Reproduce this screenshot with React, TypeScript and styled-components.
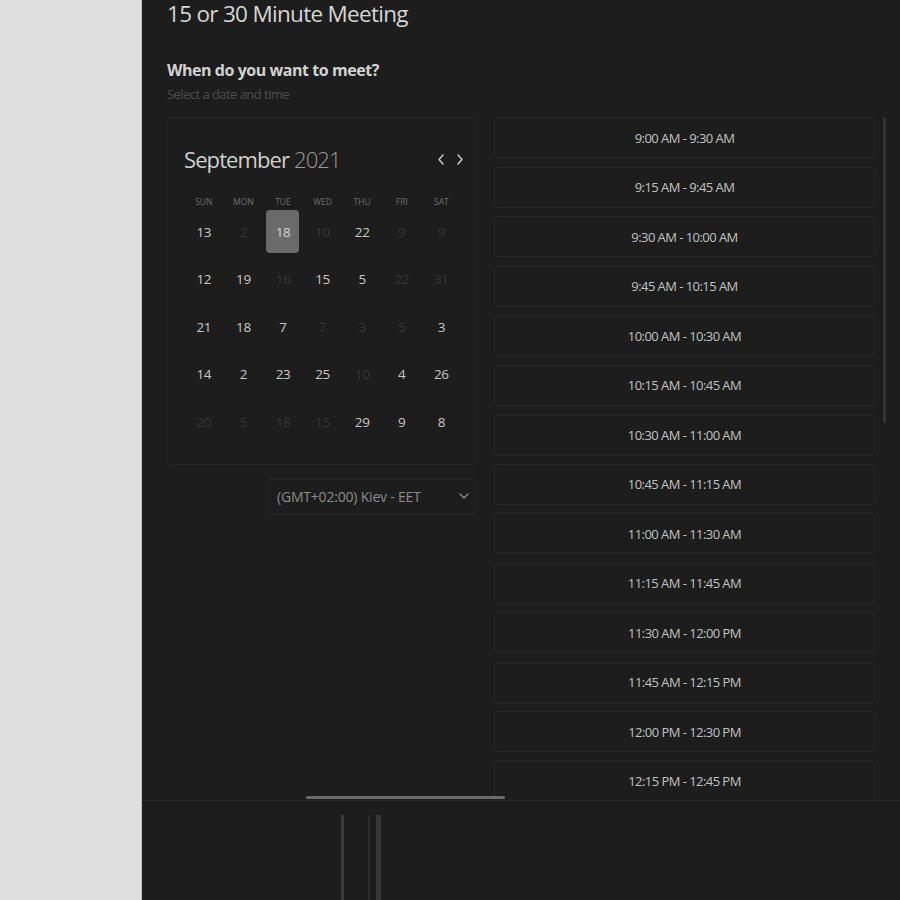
import styled, { createGlobalStyle } from 'styled-components'

const GlobalStyle = createGlobalStyle`
  html, body {
    margin: 0;
    padding: 0;
    background: #dfdfdf;
    font-family: "Open Sans", "Noto Sans", sans-serif;
  }
  * { box-sizing: border-box; }
`

const Page = styled.div`
  display: grid;
  grid-template-columns: 141px 1fr;
  height: 900px;
  overflow: hidden;
`

const Side = styled.div`
  background: #dfdfdf;
`

const Panel = styled.div`
  background: #1d1d1d;
  border-left: 1px solid #bdbdbd;
  display: flex;
  flex-direction: column;
  position: relative;
`

const ScrollArea = styled.div`
  height: 801px;
  overflow: hidden;
  padding-left: 25px;
  border-bottom: 1px solid #282828;
  position: relative;
`

const Title = styled.h1`
  margin: 0;
  font-size: 22.5px;
  line-height: 28px;
  font-weight: 400;
  color: #d6d6d6;
  letter-spacing: -0.7px;
`

const Question = styled.h2`
  margin: 31px 0 0;
  font-size: 16px;
  line-height: 22px;
  font-weight: 700;
  color: #d2d2d2;
  letter-spacing: -0.45px;
`

const Hint = styled.p`
  margin: 4px 0 0;
  font-size: 13px;
  line-height: 18px;
  color: #4e4e4e;
  letter-spacing: -0.55px;
`

const Columns = styled.div`
  display: flex;
  gap: 17px;
  margin-top: 14px;
  align-items: flex-start;
`

const CalColumn = styled.div`
  width: 310px;
  display: flex;
  flex-direction: column;
  align-items: flex-end;
`

const CalBox = styled.div`
  width: 310px;
  border: 1px solid #252525;
  border-radius: 3px;
  padding: 26px 15px 18px 16px;
`

const MonthRow = styled.div`
  display: flex;
  align-items: center;
  justify-content: space-between;
  margin-right: -3px;
`

const Month = styled.div`
  font-size: 22px;
  line-height: 30px;
  color: #cfcfcf;
  letter-spacing: -0.9px;
  span {
    font-weight: 300;
    color: #9a9a9a;
  }
`

const Arrows = styled.div`
  display: flex;
  gap: 11px;
  color: #cfcfcf;
`

const DayGrid = styled.div`
  display: grid;
  grid-template-columns: repeat(7, 39.6px);
  margin-top: 21px;
`

const DayHead = styled.div`
  font-size: 8.5px;
  line-height: 14px;
  text-align: center;
  color: #6f6f6f;
`

const Cell = styled.div<{ $muted?: boolean; $selected?: boolean }>`
  height: 47.5px;
  display: flex;
  align-items: center;
  justify-content: center;
  font-size: 13.5px;
  color: ${p => (p.$muted ? '#363636' : '#c8c8c8')};
  letter-spacing: -0.4px;
  span {
    width: 33px;
    height: 43px;
    display: flex;
    align-items: center;
    justify-content: center;
    border-radius: 4px;
    background: ${p => (p.$selected ? '#6b6b6b' : 'transparent')};
    color: ${p => (p.$selected ? '#d2d2d2' : 'inherit')};
  }
`

const DaysWrap = styled.div`
  grid-column: 1 / -1;
  display: grid;
  grid-template-columns: repeat(7, 39.6px);
  margin-top: -1px;
`

const TzSelect = styled.div`
  width: 209px;
  height: 37px;
  margin-top: 13px;
  margin-right: 1px;
  border: 1px solid #252525;
  border-radius: 3px;
  display: flex;
  align-items: center;
  justify-content: space-between;
  padding: 0 5px 0 9px;
  font-size: 14px;
  color: #8c8c8c;
  letter-spacing: -0.2px;
`

const SlotList = styled.div`
  width: 381px;
  display: flex;
  flex-direction: column;
  gap: 8.5px;
`

const Slot = styled.div`
  height: 41px;
  border: 1px solid #262626;
  border-radius: 3px;
  display: flex;
  align-items: center;
  justify-content: center;
  font-size: 13px;
  color: #c2c2c2;
  letter-spacing: -0.55px;
`

const VScroll = styled.div`
  position: absolute;
  left: 741px;
  top: 117px;
  width: 3px;
  height: 306px;
  border-radius: 2px;
  background: #353535;
`

const HScroll = styled.div`
  position: absolute;
  left: 164px;
  bottom: 1px;
  width: 199px;
  height: 3px;
  border-radius: 2px;
  background: #6b6b6b;
`

const Footer = styled.div`
  flex: 1;
  display: flex;
  padding-top: 14px;
  padding-left: 199px;
`

const Bar = styled.div<{ $w: number; $c: string; $ml: number }>`
  width: ${p => p.$w}px;
  margin-left: ${p => p.$ml}px;
  background: ${p => p.$c};
`

const weekDays = ['SUN', 'MON', 'TUE', 'WED', 'THU', 'FRI', 'SAT']

type Day = { n: number; m?: boolean; s?: boolean }

const days: Day[] = [
  { n: 13 }, { n: 2, m: true }, { n: 18, s: true }, { n: 10, m: true }, { n: 22 }, { n: 9, m: true }, { n: 9, m: true },
  { n: 12 }, { n: 19 }, { n: 16, m: true }, { n: 15 }, { n: 5 }, { n: 22, m: true }, { n: 31, m: true },
  { n: 21 }, { n: 18 }, { n: 7 }, { n: 7, m: true }, { n: 3, m: true }, { n: 5, m: true }, { n: 3 },
  { n: 14 }, { n: 2 }, { n: 23 }, { n: 25 }, { n: 10, m: true }, { n: 4 }, { n: 26 },
  { n: 20, m: true }, { n: 5, m: true }, { n: 18, m: true }, { n: 15, m: true }, { n: 29 }, { n: 9 }, { n: 8 },
]

const slots = [
  '9:00 AM - 9:30 AM',
  '9:15 AM - 9:45 AM',
  '9:30 AM - 10:00 AM',
  '9:45 AM - 10:15 AM',
  '10:00 AM - 10:30 AM',
  '10:15 AM - 10:45 AM',
  '10:30 AM - 11:00 AM',
  '10:45 AM - 11:15 AM',
  '11:00 AM - 11:30 AM',
  '11:15 AM - 11:45 AM',
  '11:30 AM - 12:00 PM',
  '11:45 AM - 12:15 PM',
  '12:00 PM - 12:30 PM',
  '12:15 PM - 12:45 PM',
]

const Chevron = ({ dir }: { dir: 'left' | 'right' | 'down' }) => {
  const d = dir === 'left' ? 'M6 2 L2 6.5 L6 11' : dir === 'right' ? 'M2 2 L6 6.5 L2 11' : 'M2 4 L6 8 L10 4'
  const w = dir === 'down' ? 12 : 8
  return (
    <svg width={w} height="13" viewBox={`0 0 ${w} 13`} fill="none">
      <path d={d} stroke="currentColor" strokeWidth="1.4" strokeLinecap="round" strokeLinejoin="round" />
    </svg>
  )
}

export default function App() {
  return (
    <>
      <GlobalStyle />
      <Page>
        <Side />
        <Panel>
          <ScrollArea>
            <Title>15 or 30 Minute Meeting</Title>
            <Question>When do you want to meet?</Question>
            <Hint>Select a date and time</Hint>
            <Columns>
              <CalColumn>
                <CalBox>
                  <MonthRow>
                    <Month>September <span>2021</span></Month>
                    <Arrows>
                      <Chevron dir="left" />
                      <Chevron dir="right" />
                    </Arrows>
                  </MonthRow>
                  <DayGrid>
                    {weekDays.map(w => <DayHead key={w}>{w}</DayHead>)}
                    <DaysWrap>
                      {days.map((d, i) => (
                        <Cell key={i} $muted={d.m} $selected={d.s}>
                          <span>{d.n}</span>
                        </Cell>
                      ))}
                    </DaysWrap>
                  </DayGrid>
                </CalBox>
                <TzSelect>
                  (GMT+02:00) Kiev - EET
                  <Chevron dir="down" />
                </TzSelect>
              </CalColumn>
              <SlotList>
                {slots.map(s => <Slot key={s}>{s}</Slot>)}
              </SlotList>
            </Columns>
            <VScroll />
            <HScroll />
          </ScrollArea>
          <Footer>
            <Bar $w={3} $c="#3a3a3a" $ml={0} />
            <Bar $w={2} $c="#2e2e2e" $ml={24} />
            <Bar $w={5} $c="#383838" $ml={6} />
          </Footer>
        </Panel>
      </Page>
    </>
  )
}
